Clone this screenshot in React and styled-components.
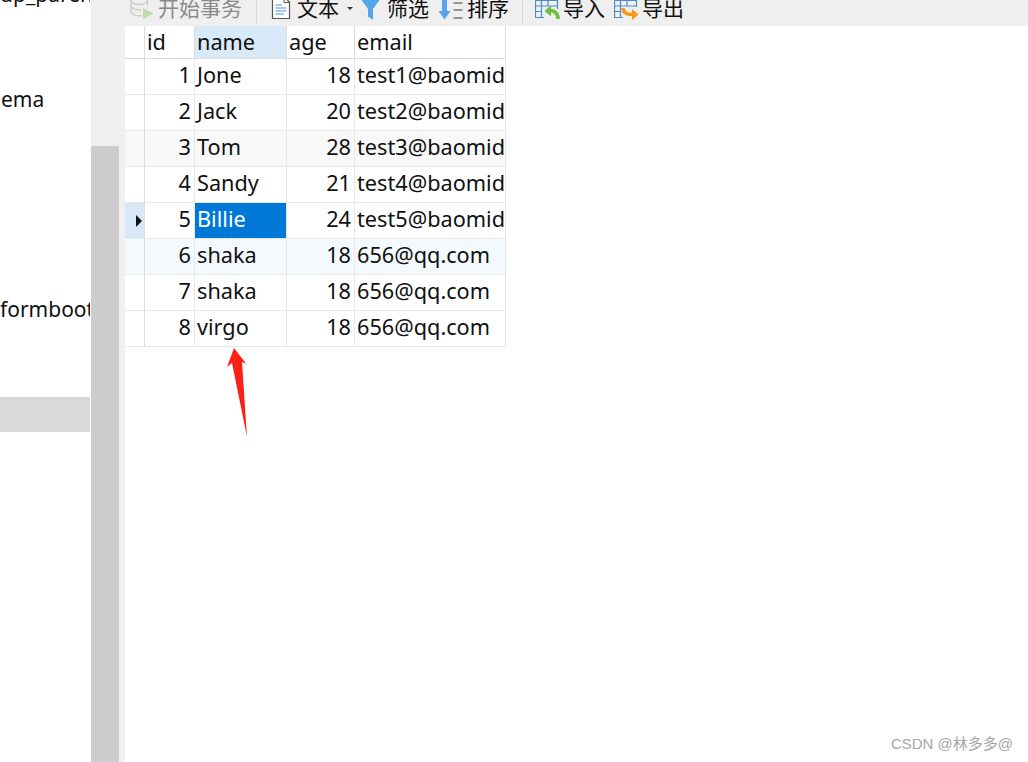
import React from 'react';
import styled, { createGlobalStyle } from 'styled-components';

const GlobalStyle = createGlobalStyle`
  html, body, #root {
    margin: 0;
    height: 100%;
    background: #fff;
  }
  body {
    font-family: "Noto Sans", "Noto Sans CJK SC", sans-serif;
    overflow: hidden;
  }
`

const Page = styled.div`
  position: relative;
  display: flex;
  width: 1028px;
  height: 762px;
  overflow: hidden;
`
const Sidebar = styled.div`
  flex: 0 0 91px;
  margin-top: -23px;
  font-size: 21px;
  color: #111;
`
const SideRow = styled.div`
  box-sizing: border-box;
  width: 90px;
  height: 35px;
  padding-left: ${props => props.$indent || 0}px;
  line-height: 35px;
  white-space: nowrap;
  overflow: hidden;
  background: ${props => (props.$selected ? '#d9d9d9' : 'transparent')};
`
const ScrollTrack = styled.div`
  flex: 0 0 28px;
  background: #efefef;
  padding-top: 146px;
`
const ScrollThumb = styled.div`
  height: 616px;
  background: #cdcdcd;
`
const Main = styled.div`
  flex: 1;
  display: flex;
  flex-direction: column;
  min-width: 0;
`
const Toolbar = styled.div`
  flex: 0 0 26px;
  box-sizing: border-box;
  padding-left: 11px;
  display: flex;
  align-items: flex-start;
  background: #efefef;
  overflow: hidden;
`
const ToolItem = styled.div`
  display: flex;
  flex: 0 0 auto;
  align-items: flex-start;
  height: 20px;
  margin-left: ${props => props.$gap || 0}px;
  font-size: 21px;
  line-height: 16px;
  white-space: nowrap;
  color: ${props => (props.$disabled ? '#8a8a8a' : '#111')};
  svg {
    display: block;
    flex: 0 0 auto;
    margin-right: ${props => props.$iconGap || 4}px;
  }
`
const Separator = styled.div`
  flex: 0 0 1px;
  height: 24px;
  margin-left: ${props => props.$gap}px;
  background: #d8d8d8;
`
const Caret = styled.span`
  width: 0;
  height: 0;
  margin: 7px 0 0 8px;
  border: 3px solid transparent;
  border-top-color: #333;
  border-bottom-width: 0;
`
const Body = styled.div`
  flex: 1;
  display: flex;
`
const Gutter = styled.div`
  flex: 0 0 6px;
  background: #f0f0f0;
`
const Grid = styled.div`
  width: 381px;
  font-size: 21.7px;
  color: #111;
`
const Row = styled.div`
  display: grid;
  grid-template-columns: 20px 50px 92px 68px 151px;
  height: ${props => (props.$header ? 33 : 36)}px;
  overflow: hidden;
`
const Cell = styled.div`
  box-sizing: border-box;
  padding: 0 ${props => (props.$right ? 3 : 2)}px 0 2px;
  line-height: 32px;
  white-space: nowrap;
  overflow: hidden;
  text-align: ${props => (props.$right ? 'right' : 'left')};
  border-right: 1px solid ${props => (props.$header ? '#dcdcdc' : '#e8e8e8')};
  border-bottom: 1px solid ${props => (props.$header ? '#dcdcdc' : '#e8e8e8')};
  background: ${props => props.$bg || 'transparent'};
  color: ${props => (props.$active ? '#fff' : 'inherit')};
`
const Indicator = styled(Cell)`
  display: flex;
  align-items: center;
  justify-content: center;
  padding: 0;
  border-right-color: #dcdcdc;
`
const Pointer = styled.span`
  width: 0;
  height: 0;
  margin-left: 8px;
  border-style: solid;
  border-width: 6px 0 6px 6px;
  border-color: transparent transparent transparent #111;
`
const Watermark = styled.div`
  position: absolute;
  right: 15px;
  bottom: 9px;
  font-family: "Liberation Sans", "Noto Sans CJK SC", sans-serif;
  font-size: 15px;
  line-height: 18px;
  color: #a6a6a6;
`
const Annotation = styled.svg`
  position: absolute;
  left: 225px;
  top: 347px;
`

const DbIcon = () => (
  <svg width="24" height="20" viewBox="0 0 24 20">
    <g fill="none" stroke="#c9c9c9" strokeWidth="1.3">
      <path d="M1 -2V12C1 14 5 16 12 16" />
      <path d="M17.500 -2V6" />
      <path d="M1 1C2 3 6 4.500 10 4.500C13 4.500 16 3.500 17.500 1" />
      <path d="M1 6.500C2 8.500 6 10 11 10" />
    </g>
    <path d="M13 8L23.500 13.500L13 19.500Z" fill="#c3d9b4" />
  </svg>
)

const DocIcon = () => (
  <svg width="20" height="20" viewBox="0 0 20 20">
    <path d="M1.500 -3H13L18.500 2V18.500H1.500Z" fill="#fff" stroke="#555" strokeWidth="1.2" />
    <path d="M13 -3V2.500H18.500" fill="none" stroke="#555" strokeWidth="1" />
    <path d="M4.500 5H11M4.500 8H15.500M4.500 11H15.500M4.500 14H13" stroke="#4a90d9" strokeWidth="1.2" />
  </svg>
)

const FilterIcon = () => (
  <svg width="21" height="20" viewBox="0 0 21 20">
    <path d="M0 -2H21L13 9V20L8 16.500V9Z" fill="#55a6e8" />
  </svg>
)

const SortIcon = () => (
  <svg width="25" height="20" viewBox="0 0 25 20">
    <path d="M4 -2H9V11H12.500L6.500 19.500L0.500 11H4Z" fill="#55a6e8" />
    <path d="M15.500 3H24.500M15.500 10H24.500M15.500 18H24.500" stroke="#777" strokeWidth="1.3" />
  </svg>
)

const ImportIcon = () => (
  <svg width="25" height="20" viewBox="0 0 25 20">
    <path
      d="M0.500 0.500H22.500V9M0.500 0.500V17.500H9M0.500 6H22.500M0.500 11.500H7M6.500 0.500V17.500M13 0.500V6"
      fill="none"
      stroke="#4a8cc7"
      strokeWidth="1.2"
    />
    <path d="M14 11C19 10 23 13 23 19" fill="none" stroke="#6cbf3a" strokeWidth="3.600" />
    <path d="M16 5.500V16.500L9.500 11Z" fill="#6cbf3a" />
  </svg>
)

const ExportIcon = () => (
  <svg width="25" height="20" viewBox="0 0 25 20">
    <path
      d="M0.500 0.500H22.500V7M0.500 0.500V17.500H9M0.500 6H22.500M0.500 11.500H6M6.500 0.500V17.500M13 0.500V6"
      fill="none"
      stroke="#4a8cc7"
      strokeWidth="1.2"
    />
    <path d="M9 8C9 12 12 14.500 18 14.500" fill="none" stroke="#f59a17" strokeWidth="3.600" />
    <path d="M18 9V20L24.500 14.500Z" fill="#f59a17" />
  </svg>
)

const rows = [
  { id: 1, name: 'Jone', age: 18, email: 'test1@baomid' },
  { id: 2, name: 'Jack', age: 20, email: 'test2@baomid' },
  { id: 3, name: 'Tom', age: 28, email: 'test3@baomid', bg: '#f8f8f8' },
  { id: 4, name: 'Sandy', age: 21, email: 'test4@baomid' },
  { id: 5, name: 'Billie', age: 24, email: 'test5@baomid', current: true },
  { id: 6, name: 'shaka', age: 18, email: '656@qq.com', bg: '#f4f9fd' },
  { id: 7, name: 'shaka', age: 18, email: '656@qq.com' },
  { id: 8, name: 'virgo', age: 18, email: '656@qq.com' },
]

const App = () => (
  <Page>
    <GlobalStyle />
    <Sidebar>
      <SideRow>up_paren</SideRow>
      <SideRow />
      <SideRow />
      <SideRow $indent={1}>ema</SideRow>
      <SideRow />
      <SideRow />
      <SideRow />
      <SideRow />
      <SideRow />
      <SideRow>formboot</SideRow>
      <SideRow />
      <SideRow />
      <SideRow $selected />
    </Sidebar>
    <ScrollTrack>
      <ScrollThumb />
    </ScrollTrack>
    <Main>
      <Toolbar>
        <ToolItem $disabled $iconGap={4}><DbIcon />开始事务</ToolItem>
        <Separator $gap={14} />
        <ToolItem $gap={14} $iconGap={6}><DocIcon />文本<Caret /></ToolItem>
        <ToolItem $gap={7} $iconGap={6}><FilterIcon />筛选</ToolItem>
        <ToolItem $gap={9} $iconGap={4}><SortIcon />排序</ToolItem>
        <Separator $gap={13} />
        <ToolItem $gap={12} $iconGap={3}><ImportIcon />导入</ToolItem>
        <ToolItem $gap={9} $iconGap={3}><ExportIcon />导出</ToolItem>
      </Toolbar>
      <Body>
        <Gutter />
        <Grid>
          <Row $header>
            <Indicator $header />
            <Cell $header>id</Cell>
            <Cell $header $bg="#d8e9f8">name</Cell>
            <Cell $header>age</Cell>
            <Cell $header>email</Cell>
          </Row>
          {rows.map(row => (
            <Row key={row.id}>
              <Indicator $bg={row.current ? '#d8e8f7' : row.bg}>
                {row.current && <Pointer />}
              </Indicator>
              <Cell $right $bg={row.bg}>{row.id}</Cell>
              <Cell $bg={row.current ? '#0078d7' : row.bg} $active={row.current}>{row.name}</Cell>
              <Cell $right $bg={row.bg}>{row.age}</Cell>
              <Cell $bg={row.bg}>{row.email}</Cell>
            </Row>
          ))}
        </Grid>
      </Body>
    </Main>
    <Annotation width="24" height="92" viewBox="0 0 24 92">
      <path d="M9 1L21 16.500L17 15L22 90L7 16L2 20Z" fill="#fb2116" />
    </Annotation>
    <Watermark>CSDN @林多多@</Watermark>
  </Page>
)

export default App;
